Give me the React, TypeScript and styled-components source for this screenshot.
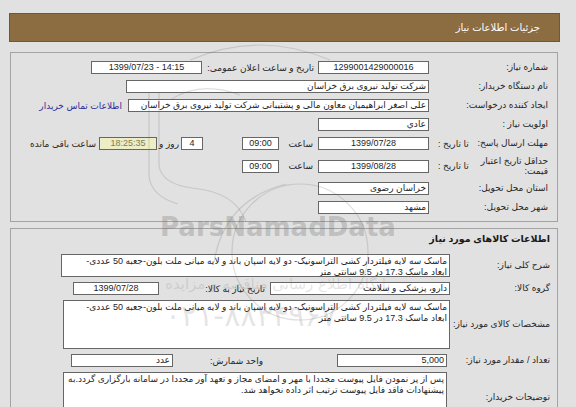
import React from "react";
import styled, { createGlobalStyle } from "styled-components";

const GlobalStyle = createGlobalStyle`
  html, body { margin: 0; padding: 0; background: #e1e1e1; }
  body { font-family: "Liberation Sans", "DejaVu Sans", sans-serif; }
`;

const Page = styled.div`
  position: relative;
  width: 576px;
  height: 407px;
  overflow: hidden;
  box-sizing: border-box;
  padding: 13px 16px 0 9px;
  background: #e1e1e1;
  direction: rtl;
  font-size: 9px;
  color: #222;
`;

const Header = styled.div`
  height: 29px;
  box-sizing: border-box;
  background: #8c6d42;
  border: 1px solid #735730;
  display: flex;
  align-items: center;
  padding-right: 19px;
  color: #fff;
  font-size: 10px;
`;

const Panel = styled.section<{ $top: number; $pt: number; $pb: number; $pr: number; $gap: number }>`
  margin: ${(p) => p.$top}px 2px 0 1px;
  border: 1px solid #a3a3a3;
  padding: ${(p) => p.$pt}px ${(p) => p.$pr}px ${(p) => p.$pb}px 8px;
  display: flex;
  flex-direction: column;
  gap: ${(p) => p.$gap}px;
`;

const Title = styled.div`
  font-weight: bold;
  font-size: 9.5px;
  line-height: 12px;
  color: #1a1a1a;
  margin-bottom: 4px;
`;

const Row = styled.div<{ $h?: number }>`
  display: flex;
  align-items: center;
  min-height: ${(p) => p.$h ?? 13}px;
`;

const LabelCell = styled.div<{ $w: number }>`
  flex: none;
  width: ${(p) => p.$w}px;
  box-sizing: border-box;
  padding-left: 9px;
  display: flex;
  align-items: center;
  justify-content: space-between;
`;

const Label = styled.span<{ $wrap?: number }>`
  white-space: ${(p) => (p.$wrap ? "normal" : "nowrap")};
  max-width: ${(p) => (p.$wrap ? `${p.$wrap}px` : "none")};
  line-height: ${(p) => (p.$wrap ? "10px" : "11px")};
  color: #262626;
`;

const SubLabel = styled.span`
  white-space: nowrap;
  color: #262626;
`;

const Cell = styled.div<{ $w?: number; $pr?: number }>`
  flex: none;
  width: ${(p) => (p.$w ? `${p.$w}px` : "auto")};
  box-sizing: border-box;
  padding-right: ${(p) => p.$pr ?? 0}px;
  white-space: nowrap;
  color: #262626;
`;

const Field = styled.div<{
  $w: number;
  $align?: "right" | "center";
  $ltr?: boolean;
  $tone?: "plain" | "timer";
  $shift?: number;
}>`
  flex: none;
  width: ${(p) => p.$w}px;
  height: 13px;
  margin-right: ${(p) => p.$shift ?? 0}px;
  box-sizing: border-box;
  border: 1px solid #666;
  background: ${(p) => (p.$tone === "timer" ? "#eeeec6" : "#fff")};
  color: ${(p) => (p.$tone === "timer" ? "#7d7d55" : "#1e1e1e")};
  line-height: 11px;
  padding: 0 2px;
  text-align: ${(p) => p.$align ?? "right"};
  direction: ${(p) => (p.$ltr ? "ltr" : "rtl")};
  white-space: nowrap;
  overflow: hidden;
`;

const TextBlock = styled.div<{ $w: number; $h: number; $shift?: number }>`
  flex: none;
  width: ${(p) => p.$w}px;
  height: ${(p) => p.$h}px;
  margin-right: ${(p) => p.$shift ?? 0}px;
  box-sizing: border-box;
  border: 1px solid #666;
  background: #fff;
  padding: 1px 2px;
  line-height: 11px;
  text-align: right;
  overflow: hidden;
  color: #1e1e1e;
`;

const Line = styled.div`
  white-space: nowrap;
`;

const ContactLink = styled.a`
  color: #2d2d9a;
  text-decoration: none;
  white-space: nowrap;
  margin-right: 6px;
`;

const Watermark = styled.div`
  position: absolute;
  inset: 0;
  pointer-events: none;
`;

const WmBrand = styled.div`
  position: absolute;
  left: 160px;
  top: 213px;
  direction: ltr;
  font-family: "DejaVu Sans", sans-serif;
  font-weight: bold;
  font-size: 26px;
  line-height: 28px;
  color: rgba(110, 110, 110, 0.3);
`;

const WmTagline = styled.div`
  position: absolute;
  left: 165px;
  top: 275px;
  font-family: "DejaVu Sans", sans-serif;
  font-size: 15px;
  line-height: 18px;
  color: rgba(120, 120, 120, 0.2);
`;

const WmPhone = styled.div`
  position: absolute;
  left: 165px;
  top: 299px;
  direction: ltr;
  font-family: "DejaVu Sans", sans-serif;
  font-size: 30px;
  line-height: 34px;
  color: rgba(120, 120, 120, 0.2);
`;

const WmArt = styled.svg`
  position: absolute;
  left: 0;
  top: 0;
`;

export default function App() {
  return (
    <>
      <GlobalStyle />
      <Page>
        <Header>جزئیات اطلاعات نیاز</Header>

        <Panel $top={10} $pt={8} $pb={7} $pr={9} $gap={6}>
          <Row>
            <LabelCell $w={119}>
              <Label>شماره نیاز:</Label>
            </LabelCell>
            <Field $w={111} $align="center" $ltr>
              1299001429000016
            </Field>
            <Cell $w={116} $pr={4}>
              تاریخ و ساعت اعلان عمومی:
            </Cell>
            <Field $w={111} $align="center" $ltr>
              1399/07/23 - 14:15
            </Field>
          </Row>
          <Row>
            <LabelCell $w={119}>
              <Label>نام دستگاه خریدار:</Label>
            </LabelCell>
            <Field $w={303}>شرکت تولید نیروی برق خراسان</Field>
          </Row>
          <Row>
            <LabelCell $w={119}>
              <Label>ایجاد کننده درخواست:</Label>
            </LabelCell>
            <Field $w={301}>
              علی اصغر ابراهیمیان معاون مالی و پشتیبانی شرکت تولید نیروی برق خراسان
            </Field>
            <ContactLink href="#">اطلاعات تماس خریدار</ContactLink>
          </Row>
          <Row>
            <LabelCell $w={119}>
              <Label>اولویت نیاز :</Label>
            </LabelCell>
            <Field $w={111}>عادي</Field>
          </Row>
          <Row>
            <LabelCell $w={119}>
              <Label>مهلت ارسال پاسخ:</Label>
              <SubLabel>تا تاریخ :</SubLabel>
            </LabelCell>
            <Field $w={111} $align="center" $ltr>
              1399/07/28
            </Field>
            <Cell $w={39} $pr={5}>
              ساعت
            </Cell>
            <Field $w={37} $align="center" $ltr>
              09:00
            </Field>
            <Cell $w={39} />
            <Field $w={22} $align="center" $ltr>
              4
            </Field>
            <Cell $w={24} $pr={2}>
              روز و
            </Cell>
            <Field $w={58} $align="center" $ltr $tone="timer">
              18:25:35
            </Field>
            <Cell $pr={3}>ساعت باقی مانده</Cell>
          </Row>
          <Row $h={20}>
            <LabelCell $w={119}>
              <Label $wrap={68}>حداقل تاریخ اعتبار قیمت:</Label>
              <SubLabel>تا تاریخ :</SubLabel>
            </LabelCell>
            <Field $w={111} $align="center" $ltr>
              1399/08/28
            </Field>
            <Cell $w={39} $pr={5}>
              ساعت
            </Cell>
            <Field $w={37} $align="center" $ltr>
              09:00
            </Field>
          </Row>
          <Row>
            <LabelCell $w={119}>
              <Label>استان محل تحویل:</Label>
            </LabelCell>
            <Field $w={111}>خراسان رضوی</Field>
          </Row>
          <Row>
            <LabelCell $w={119}>
              <Label>شهر محل تحویل:</Label>
            </LabelCell>
            <Field $w={111}>مشهد</Field>
          </Row>
        </Panel>

        <Panel $top={6} $pt={4} $pb={0} $pr={7} $gap={5}>
          <Title>اطلاعات کالاهای مورد نیاز</Title>
          <Row>
            <LabelCell $w={100}>
              <Label>شرح کلی نیاز:</Label>
            </LabelCell>
            <TextBlock $w={389} $h={23}>
              <Line>
                ماسک سه لایه فیلتردار کشی التراسونیک- دو لایه اسپان باند و لایه میانی ملت بلون-جعبه 50 عددی-
              </Line>
              <Line>ابعاد ماسک 17.3 در 9.5 سانتی متر</Line>
            </TextBlock>
          </Row>
          <Row>
            <LabelCell $w={100}>
              <Label>گروه کالا:</Label>
            </LabelCell>
            <Field $w={180}>دارو، پزشکی و سلامت</Field>
            <Cell $w={111} $pr={5}>
              تاریخ نیاز به کالا:
            </Cell>
            <Field $w={86} $align="center" $ltr>
              1399/07/28
            </Field>
          </Row>
          <Row>
            <LabelCell $w={100}>
              <Label>مشخصات کالای مورد نیاز:</Label>
            </LabelCell>
            <TextBlock $w={387} $h={49}>
              <Line>
                ماسک سه لایه فیلتردار کشی التراسونیک- دو لایه اسپان باند و لایه میانی ملت بلون-جعبه 50 عددی-
              </Line>
              <Line>ابعاد ماسک 17.3 در 9.5 سانتی متر</Line>
            </TextBlock>
          </Row>
          <Row>
            <LabelCell $w={100}>
              <Label>تعداد / مقدار مورد نیاز:</Label>
            </LabelCell>
            <Field $w={110} $ltr $shift={3}>
              5,000
            </Field>
            <Cell $w={164} $pr={74}>
              واحد شمارش:
            </Cell>
            <Field $w={102}>عدد</Field>
          </Row>
          <Row>
            <LabelCell $w={100}>
              <Label>توضیحات خریدار:</Label>
            </LabelCell>
            <TextBlock $w={384} $h={50} $shift={3}>
              <Line>
                پس از پر نمودن فایل پیوست مجددا با مهر و امضای مجاز و تعهد آور مجددا در سامانه بارگزاری گردد.به
              </Line>
              <Line>پیشنهادات فاقد فایل پیوست ترتیب اثر داده نخواهد شد.</Line>
            </TextBlock>
          </Row>
        </Panel>

        <Watermark>
          <WmArt width="576" height="407" viewBox="0 0 576 407" fill="none">
            <g stroke="rgba(110,110,110,0.22)" strokeWidth="1.2">
              <path d="M149 92 V176 Q151 196 178 204" />
              <path d="M159 92 V166 Q162 184 192 188 Q236 192 246 222" />
              <path d="M190 60 Q260 30 330 60" />
              <path d="M170 100 Q200 80 240 95" />
              <circle cx="300" cy="252" r="68" />
              <path d="M214 262 Q224 200 286 184" />
            </g>
          </WmArt>
          <WmBrand>ParsNamadData</WmBrand>
          <WmTagline>پایگاه اطلاع رسانی مناقصه و مزایده</WmTagline>
          <WmPhone>۰۲۱-۸۸۳۴۹۶۷۰</WmPhone>
        </Watermark>
      </Page>
    </>
  );
}
